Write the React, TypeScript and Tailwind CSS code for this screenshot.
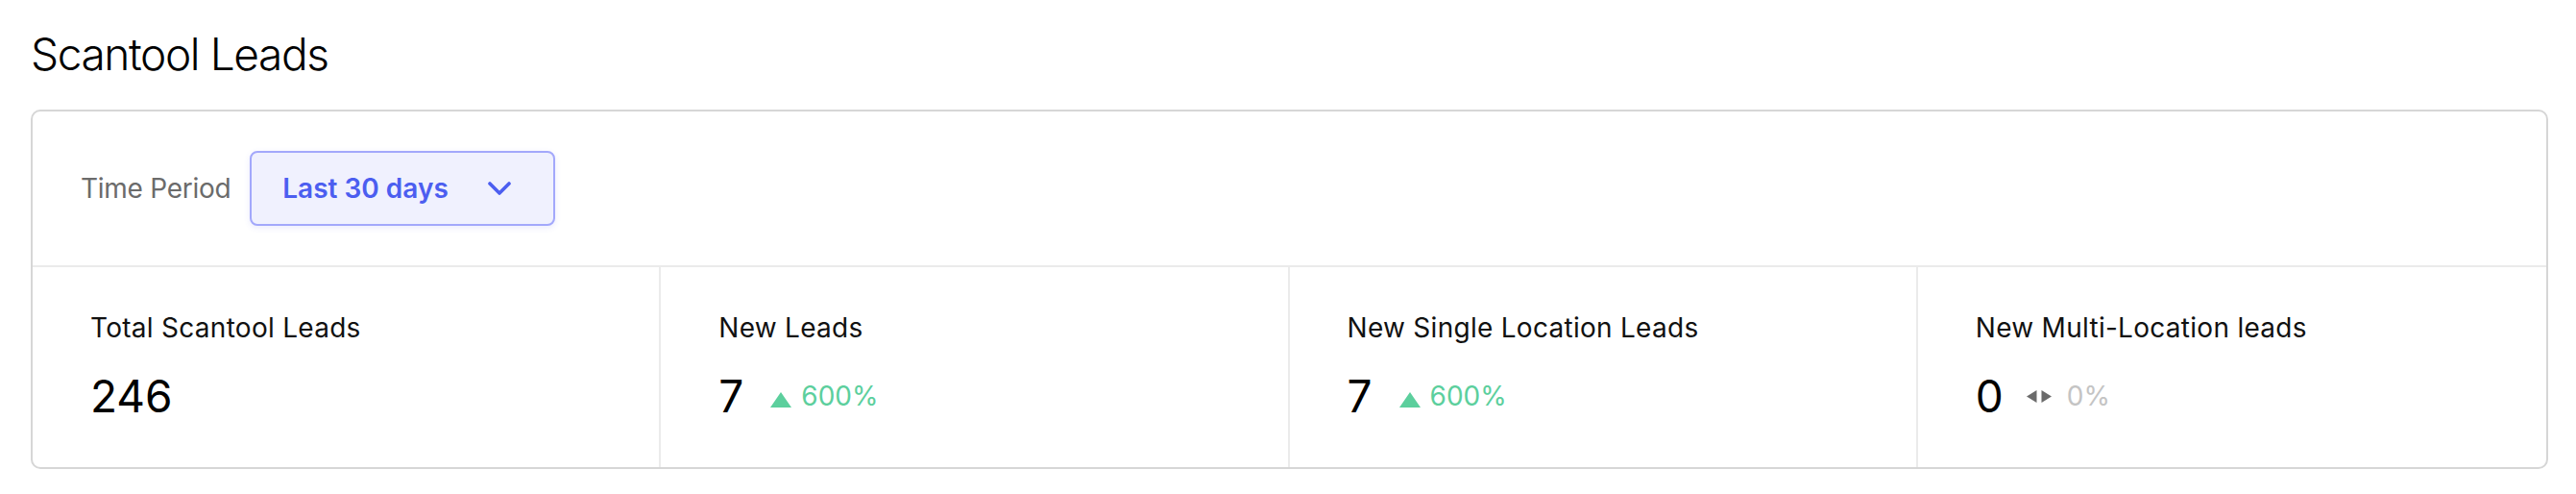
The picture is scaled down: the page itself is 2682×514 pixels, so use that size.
type Stat = {
  label: string;
  value: string;
  delta: string;
  trend: 'up' | 'flat';
};

const stats: Stat[] = [
  { label: 'Total Scantool Leads', value: '246', delta: '', trend: 'flat' },
  { label: 'New Leads', value: '7', delta: '600%', trend: 'up' },
  { label: 'New Single Location Leads', value: '7', delta: '600%', trend: 'up' },
  { label: 'New Multi-Location leads', value: '0', delta: '0%', trend: 'flat' },
];

const UpArrow = () => (
  <svg width="22" height="16" viewBox="0 0 22 16" className="mt-2 shrink-0">
    <path d="M11 0 L22 16 L0 16 Z" fill="#5ccf9d" />
  </svg>
);

const FlatArrows = () => (
  <svg width="26" height="13" viewBox="0 0 26 13" className="shrink-0">
    <path d="M10.5 0 L10.5 13 L0 6.5 Z" fill="#6b6b6b" />
    <path d="M15.5 0 L26 6.5 L15.5 13 Z" fill="#6b6b6b" />
  </svg>
);

const Chevron = () => (
  <svg width="24" height="15" viewBox="0 0 24 15" className="ml-auto shrink-0">
    <path d="M2 2 L12 12 L22 2" fill="none" stroke="#4c5ef0" strokeWidth="3.6" strokeLinecap="round" strokeLinejoin="round" />
  </svg>
);

const StatCell = ({ stat, last }: { stat: Stat; last: boolean }) => (
  <div className={`flex flex-col pl-[60px] pt-[42px] pb-[51px] ${last ? '' : 'border-r-2 border-[#ebebeb]'}`}>
    <div className="text-[28px] leading-[42px] tracking-[0.01em] text-[#111]">{stat.label}</div>
    <div className="mt-[27px] flex items-center">
      <span className="text-[46px] leading-none text-black">{stat.value}</span>
      {stat.delta && stat.trend === 'up' && (
        <span className="ml-[28px] flex items-center gap-[10px]">
          <UpArrow />
          <span className="text-[28px] leading-none text-[#5ccf9d]">{stat.delta}</span>
        </span>
      )}
      {stat.delta && stat.trend === 'flat' && (
        <span className="ml-[24px] flex items-center gap-[16px]">
          <FlatArrows />
          <span className="text-[28px] leading-none text-[#c4c4c4]">{stat.delta}</span>
        </span>
      )}
    </div>
  </div>
);

export default function App() {
  return (
    <div className="min-h-screen bg-white font-['Inter','Liberation_Sans',sans-serif] px-[32px] pt-[24px]">
      <h1 className="text-[46px] leading-[64px] font-light tracking-[-0.03em] text-black">Scantool Leads</h1>

      <div className="mt-[26px] w-[2621px] rounded-[10px] border-2 border-[#d6d6d6] bg-white">
        <div className="flex items-center px-[50px] py-[41px] border-b-2 border-[#ebebeb]">
          <span className="text-[28px] tracking-[-0.01em] text-[#6b6b6b]">Time Period</span>
          <button className="ml-[20px] flex h-[78px] w-[318px] items-center rounded-[8px] border-2 border-[#a3a8fb] bg-[#f0f1fe] pl-[32px] pr-[44px] shadow-[0_2px_6px_rgba(80,90,240,0.12)]">
            <span className="text-[28px] font-semibold text-[#4c5ef0]">Last 30 days</span>
            <Chevron />
          </button>
        </div>

        <div className="grid grid-cols-4">
          {stats.map((s, i) => (
            <StatCell key={s.label} stat={s} last={i === stats.length - 1} />
          ))}
        </div>
      </div>
    </div>
  );
}
